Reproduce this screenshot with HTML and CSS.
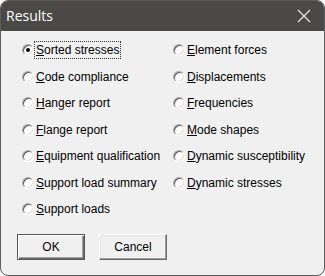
FILE: index.html
```html
<!DOCTYPE html>
<html>
<head>
    <title>Results</title>
    <link rel="stylesheet" href="styles.css">
</head>
<body>
    <div class="window">
        <div class="titlebar">
            <span class="title">Results</span>
            <svg class="close" width="14" height="14" viewBox="0 0 14 14">
                <path d="M1 1 L13 13 M13 1 L1 13" stroke="#e6e6e6" stroke-width="1.2" fill="none"/>
            </svg>
        </div>
        <div class="client">
            <div class="options">
                <label class="opt"><span class="radio checked"></span><span class="txt focus"><u>S</u>orted stresses</span></label>
                <label class="opt"><span class="radio"></span><span class="txt"><u>C</u>ode compliance</span></label>
                <label class="opt"><span class="radio"></span><span class="txt"><u>H</u>anger report</span></label>
                <label class="opt"><span class="radio"></span><span class="txt"><u>F</u>lange report</span></label>
                <label class="opt"><span class="radio"></span><span class="txt"><u>E</u>quipment qualification</span></label>
                <label class="opt"><span class="radio"></span><span class="txt"><u>S</u>upport load summary</span></label>
                <label class="opt"><span class="radio"></span><span class="txt"><u>S</u>upport loads</span></label>

                <label class="opt"><span class="radio"></span><span class="txt"><u>E</u>lement forces</span></label>
                <label class="opt"><span class="radio"></span><span class="txt"><u>D</u>isplacements</span></label>
                <label class="opt"><span class="radio"></span><span class="txt"><u>F</u>requencies</span></label>
                <label class="opt"><span class="radio"></span><span class="txt"><u>M</u>ode shapes</span></label>
                <label class="opt"><span class="radio"></span><span class="txt"><u>D</u>ynamic susceptibility</span></label>
                <label class="opt"><span class="radio"></span><span class="txt"><u>D</u>ynamic stresses</span></label>
            </div>
            <div class="buttons">
                <button class="btn default">OK</button>
                <button class="btn">Cancel</button>
            </div>
        </div>
    </div>
</body>
</html>
```

FILE: styles.css
```css
html, body {
    margin: 0;
    padding: 0;
    background: #ffffff;
}

.window {
    width: 325px;
    height: 276px;
    box-sizing: border-box;
    border: 1px solid #5c5c5c;
    border-radius: 8px;
    overflow: hidden;
    background: #f0f0f0;
    font-family: "Liberation Sans", Arial, sans-serif;
    font-size: 12px;
    color: #000;
}

.titlebar {
    height: 30px;
    background: #4a4947;
    color: #fff;
    display: flex;
    align-items: center;
    justify-content: space-between;
    padding: 0 13px 0 5px;
}

.title {
    font-family: "Open Sans", "Noto Sans", sans-serif;
    font-size: 14px;
    position: relative;
    top: -1px;
}

.close {
    display: block;
}

.client {
    padding: 6px 0 0 21px;
}

.options {
    display: grid;
    grid-auto-flow: column;
    grid-template-rows: repeat(7, 26.5px);
    grid-template-columns: 151px auto;
}

.opt {
    display: flex;
    align-items: center;
}

.radio {
    width: 12px;
    height: 12px;
    box-sizing: border-box;
    border-radius: 50%;
    border: 1px solid;
    border-color: #a8a8a8 #ffffff #ffffff #a8a8a8;
    box-shadow: inset 1px 1px 0 #5a5a5a, inset -1px -1px 0 #dcdcdc;
    background: #ffffff;
    display: flex;
    align-items: center;
    justify-content: center;
}

.radio.checked::after {
    content: "";
    width: 4px;
    height: 4px;
    border-radius: 50%;
    background: #000;
}

.txt {
    padding: 1px 1px;
    border: 1px solid transparent;
}

.txt.focus {
    border: 1px dotted #333;
}

.buttons {
    display: flex;
    gap: 14px;
    margin: 11px 0 0 -5px;
}

.btn {
    width: 68px;
    height: 26px;
    box-sizing: border-box;
    background: #f0f0f0;
    font-family: "Liberation Sans", Arial, sans-serif;
    font-size: 12px;
    color: #000;
    padding: 0;
    border: 1px solid;
    border-color: #ffffff #696969 #696969 #ffffff;
    box-shadow: inset -1px -1px 0 #a0a0a0, inset 1px 1px 0 #e3e3e3;
}

.btn.default {
    border: 1px solid #555;
    box-shadow: inset 1px 1px 0 #ffffff, inset -1px -1px 0 #696969, inset -2px -2px 0 #a0a0a0;
}
```
